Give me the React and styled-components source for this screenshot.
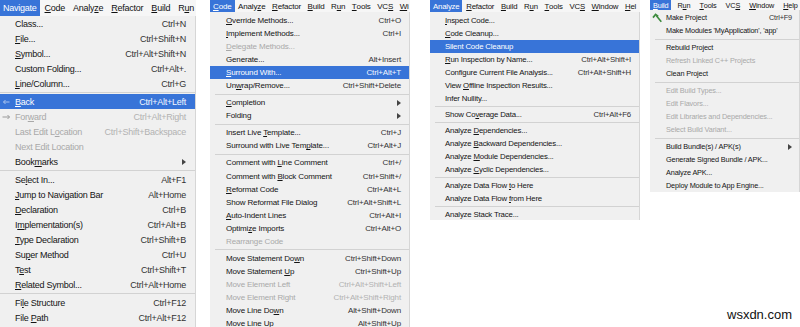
import styled, { createGlobalStyle } from "styled-components";

const GlobalStyle = createGlobalStyle`
  html, body {
    margin: 0;
    padding: 0;
    background: #fff;
  }
  body {
    font-family: "Liberation Sans", Arial, sans-serif;
  }
`;

const Page = styled.div`
  position: relative;
  display: flex;
  align-items: flex-start;
  width: 800px;
  height: 327px;
  overflow: hidden;
  background: #fff;
`;

const Panel = styled.div`
  flex: none;
  display: flex;
  flex-direction: column;
  width: ${(p) => p.$w}px;
  margin-left: ${(p) => p.$ml}px;
  font-size: ${(p) => p.$fs}px;
  letter-spacing: ${(p) => p.$ls}px;
`;

const MenuBar = styled.div`
  display: flex;
  align-items: stretch;
  gap: ${(p) => p.$gap}px;
  height: ${(p) => p.$h}px;
  background: #f6f6f6;
  white-space: nowrap;
  overflow: hidden;
`;

const BarItem = styled.div`
  display: flex;
  align-items: center;
  padding: 0 3px;
  background: ${(p) => (p.$active ? "#3874d8" : "transparent")};
  color: ${(p) => (p.$active ? "#fff" : "#111")};
`;

const Popup = styled.div`
  box-sizing: border-box;
  height: ${(p) => p.$h}px;
  padding-top: ${(p) => p.$pt}px;
  background: #f0f0f0;
  border-right: 1px solid #d6d6d6;
  overflow: hidden;
`;

const Row = styled.div`
  display: grid;
  grid-template-columns: ${(p) => p.$pl}px 1fr auto;
  align-items: center;
  height: ${(p) => p.$rh}px;
  padding-right: ${(p) => p.$pr}px;
  white-space: nowrap;
  background: ${(p) => (p.$active ? "#3874d8" : "transparent")};
  color: ${(p) => (p.$active ? "#fff" : p.$disabled ? "#a9a9a9" : "#141414")};
`;

const Gutter = styled.span`
  display: flex;
  align-items: center;
  padding-left: 2px;
`;

const Shortcut = styled.span`
  color: ${(p) => (p.$active ? "#f2f6ff" : p.$disabled ? "#b2b2b2" : "#333")};
`;

const SubArrow = styled.span`
  width: 0;
  height: 0;
  border-left: 4px solid #444;
  border-top: 3px solid transparent;
  border-bottom: 3px solid transparent;
`;

const Separator = styled.div`
  height: 1px;
  margin: ${(p) => p.$m}px 0 ${(p) => p.$m}px ${(p) => p.$inset}px;
  background: #d2d2d2;
`;

const Mn = styled.span`
  text-decoration: underline;
  text-underline-offset: 1px;
  text-decoration-thickness: 1px;
`;

const Watermark = styled.div`
  position: absolute;
  left: 727px;
  top: 308px;
  font-family: "Liberation Sans", Arial, sans-serif;
  font-size: 13px;
  line-height: 14px;
  color: #111;
`;

const Label = ({ text }) => {
  const i = text.indexOf("&");
  if (i < 0) return text;
  return (
    <>
      {text.slice(0, i)}
      <Mn>{text[i + 1]}</Mn>
      {text.slice(i + 2)}
    </>
  );
};

const BackIcon = () => (
  <svg width="8" height="6" viewBox="0 0 8 6">
    <path d="M7.5 3H1.5M3.5 1L1.5 3L3.5 5" stroke="#a9c3ee" strokeWidth="1" fill="none" />
  </svg>
);

const ForwardIcon = () => (
  <svg width="9" height="6" viewBox="0 0 9 6">
    <path d="M0.5 3H7.5M5.5 1L7.5 3L5.5 5" stroke="#9a9a9a" strokeWidth="1" fill="none" />
  </svg>
);

const HammerIcon = () => (
  <svg width="10" height="10" viewBox="0 0 10 10">
    <path d="M1 4.6L3.6 1.4L6.2 3.4" stroke="#3d8a3d" strokeWidth="1.7" fill="none" />
    <path d="M4.4 2.8L9.3 8.8" stroke="#3d8a3d" strokeWidth="1.6" fill="none" />
  </svg>
);

const icons = { back: BackIcon, fwd: ForwardIcon, hammer: HammerIcon };

const SEP = "sep";

const panels = [
  {
    w: 196, ml: 0, fs: 9, ls: -0.25, gap: 2, bar: 16, pt: 0, popH: 311, rh: 15, pl: 15, pr: 9, sm: 1, inset: 0,
    menu: [
      { t: "Navigate", active: true },
      { t: "&Code" },
      { t: "Analy&ze" },
      { t: "&Refactor" },
      { t: "&Build" },
      { t: "R&un" },
    ],
    items: [
      { t: "Class...", k: "Ctrl+N" },
      { t: "&File...", k: "Ctrl+Shift+N" },
      { t: "&Symbol...", k: "Ctrl+Alt+Shift+N" },
      { t: "Custom Folding...", k: "Ctrl+Alt+." },
      { t: "&Line/Column...", k: "Ctrl+G" },
      SEP,
      { t: "&Back", k: "Ctrl+Alt+Left", active: true, icon: "back" },
      { t: "For&ward", k: "Ctrl+Alt+Right", disabled: true, icon: "fwd" },
      { t: "Last Edit L&ocation", k: "Ctrl+Shift+Backspace", disabled: true },
      { t: "Next Edit Location", disabled: true },
      { t: "Book&marks", sub: true },
      SEP,
      { t: "Se&lect In...", k: "Alt+F1" },
      { t: "&Jump to Navigation Bar", k: "Alt+Home" },
      { t: "&Declaration", k: "Ctrl+B" },
      { t: "I&mplementation(s)", k: "Ctrl+Alt+B" },
      { t: "&Type Declaration", k: "Ctrl+Shift+B" },
      { t: "Su&per Method", k: "Ctrl+U" },
      { t: "T&est", k: "Ctrl+Shift+T" },
      { t: "&Related Symbol...", k: "Ctrl+Alt+Home" },
      SEP,
      { t: "Fi&le Structure", k: "Ctrl+F12" },
      { t: "File &Path", k: "Ctrl+Alt+F12" },
    ],
  },
  {
    w: 200, ml: 14, fs: 8, ls: -0.15, gap: 0.5, bar: 12, pt: 2, popH: 315, rh: 13.05, pl: 16, pr: 8, sm: 1.5, inset: 5,
    menu: [
      { t: "&Code", active: true },
      { t: "Analy&ze" },
      { t: "&Refactor" },
      { t: "&Build" },
      { t: "R&un" },
      { t: "&Tools" },
      { t: "VC&S" },
      { t: "&Wi" },
    ],
    items: [
      { t: "&Override Methods...", k: "Ctrl+O" },
      { t: "&Implement Methods...", k: "Ctrl+I" },
      { t: "&Delegate Methods...", disabled: true },
      { t: "Generate...", k: "Alt+Insert" },
      { t: "&Surround With...", k: "Ctrl+Alt+T", active: true },
      { t: "Un&wrap/Remove...", k: "Ctrl+Shift+Delete" },
      SEP,
      { t: "&Completion", sub: true },
      { t: "Folding", sub: true },
      SEP,
      { t: "Insert Live &Template...", k: "Ctrl+J" },
      { t: "Surround with Live Tem&plate...", k: "Ctrl+Alt+J" },
      SEP,
      { t: "Comment with &Line Comment", k: "Ctrl+/" },
      { t: "Comment with &Block Comment", k: "Ctrl+Shift+/" },
      { t: "&Reformat Code", k: "Ctrl+Alt+L" },
      { t: "Show Reformat File Dialog", k: "Ctrl+Alt+Shift+L" },
      { t: "&Auto-Indent Lines", k: "Ctrl+Alt+I" },
      { t: "Optimi&ze Imports", k: "Ctrl+Alt+O" },
      { t: "Rearrange Code", disabled: true },
      SEP,
      { t: "Move Statement Do&wn", k: "Ctrl+Shift+Down" },
      { t: "Move Statement &Up", k: "Ctrl+Shift+Up" },
      { t: "Move Element Left", k: "Ctrl+Alt+Shift+Left", disabled: true },
      { t: "Move Element Right", k: "Ctrl+Alt+Shift+Right", disabled: true },
      { t: "Move Line Do&wn", k: "Alt+Shift+Down" },
      { t: "Move Line &Up", k: "Alt+Shift+Up" },
    ],
  },
  {
    w: 210, ml: 20, fs: 7.8, ls: -0.18, gap: 0.7, bar: 12, pt: 2, popH: 208, rh: 13, pl: 15, pr: 8, sm: 1, inset: 5,
    menu: [
      { t: "Analyze", active: true },
      { t: "&Refactor" },
      { t: "&Build" },
      { t: "R&un" },
      { t: "&Tools" },
      { t: "VC&S" },
      { t: "&Window" },
      { t: "&Hel" },
    ],
    items: [
      { t: "&Inspect Code..." },
      { t: "&Code Cleanup..." },
      { t: "Silent Code Cleanup", active: true },
      { t: "&Run Inspection by Name...", k: "Ctrl+Alt+Shift+I" },
      { t: "Configure Current File Analysis...", k: "Ctrl+Alt+Shift+H" },
      { t: "View &Offline Inspection Results..." },
      { t: "Infer Nullity..." },
      SEP,
      { t: "Show Co&verage Data...", k: "Ctrl+Alt+F6" },
      SEP,
      { t: "Analyze &Dependencies..." },
      { t: "Analyze &Backward Dependencies..." },
      { t: "Analyze &Module Dependencies..." },
      { t: "Analyze &Cyclic Dependencies..." },
      SEP,
      { t: "Analyze Data Flow &to Here" },
      { t: "Analyze Data Flow &from Here" },
      SEP,
      { t: "Analyze Stack Trace..." },
    ],
  },
  {
    w: 150, ml: 10, fs: 7.3, ls: -0.15, gap: 3, bar: 10, pt: 1, popH: 182, rh: 13, pl: 16, pr: 7, sm: 1.5, inset: 5,
    menu: [
      { t: "&Build", active: true },
      { t: "R&un" },
      { t: "&Tools" },
      { t: "VC&S" },
      { t: "&Window" },
      { t: "&Help" },
    ],
    items: [
      { t: "Make Project", k: "Ctrl+F9", icon: "hammer" },
      { t: "Make Modules 'MyApplication', 'app'" },
      SEP,
      { t: "Rebuild Project" },
      { t: "Refresh Linked C++ Projects", disabled: true },
      { t: "Clean Project" },
      SEP,
      { t: "Edit Build Types...", disabled: true },
      { t: "Edit Flavors...", disabled: true },
      { t: "Edit Libraries and Dependencies...", disabled: true },
      { t: "Select Build Variant...", disabled: true },
      SEP,
      { t: "Build Bundle(s) / APK(s)", sub: true },
      { t: "Generate Signed Bundle / APK..." },
      { t: "Analyze APK..." },
      { t: "Deploy Module to App Engine..." },
    ],
  },
];

const MenuPanel = ({ cfg }) => (
  <Panel $w={cfg.w} $ml={cfg.ml} $fs={cfg.fs} $ls={cfg.ls}>
    <MenuBar $h={cfg.bar} $gap={cfg.gap}>
      {cfg.menu.map((m) => (
        <BarItem key={m.t} $active={m.active}>
          <Label text={m.t} />
        </BarItem>
      ))}
    </MenuBar>
    <Popup $h={cfg.popH} $pt={cfg.pt}>
      {cfg.items.map((it, i) => {
        if (it === SEP) return <Separator key={i} $m={cfg.sm} $inset={cfg.inset} />;
        const Icon = it.icon && icons[it.icon];
        return (
          <Row
            key={i}
            $rh={cfg.rh}
            $pl={cfg.pl}
            $pr={cfg.pr}
            $active={it.active}
            $disabled={it.disabled}
          >
            <Gutter>{Icon && <Icon />}</Gutter>
            <span>
              <Label text={it.t} />
            </span>
            {it.sub ? (
              <SubArrow />
            ) : (
              <Shortcut $active={it.active} $disabled={it.disabled}>
                {it.k}
              </Shortcut>
            )}
          </Row>
        );
      })}
    </Popup>
  </Panel>
);

const App = () => (
  <Page>
    <GlobalStyle />
    {panels.map((cfg) => (
      <MenuPanel key={cfg.menu[0].t} cfg={cfg} />
    ))}
    <Watermark>wsxdn.com</Watermark>
  </Page>
);

export default App;
